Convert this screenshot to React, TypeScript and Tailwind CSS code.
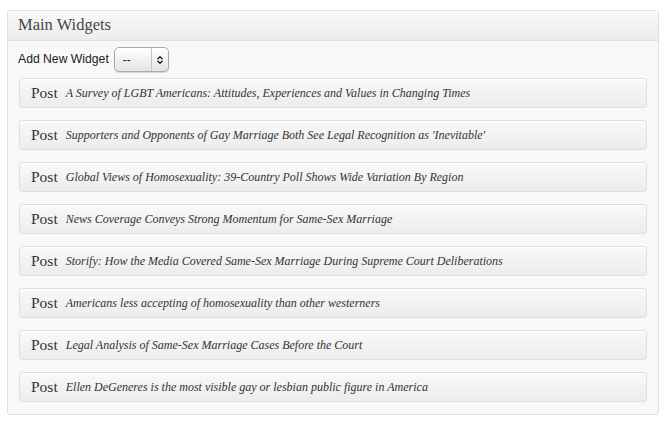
import { ChevronsUpDown } from "lucide-react";

const posts = [
  "A Survey of LGBT Americans: Attitudes, Experiences and Values in Changing Times",
  "Supporters and Opponents of Gay Marriage Both See Legal Recognition as 'Inevitable'",
  "Global Views of Homosexuality: 39-Country Poll Shows Wide Variation By Region",
  "News Coverage Conveys Strong Momentum for Same-Sex Marriage",
  "Storify: How the Media Covered Same-Sex Marriage During Supreme Court Deliberations",
  "Americans less accepting of homosexuality than other westerners",
  "Legal Analysis of Same-Sex Marriage Cases Before the Court",
  "Ellen DeGeneres is the most visible gay or lesbian public figure in America",
];

const serif = { fontFamily: 'Georgia, "Liberation Serif", serif' };

export default function App() {
  return (
    <div className="h-[424px] w-[667px] bg-white pt-[10px] pl-[7px]">
      <div className="w-[652px] rounded-[3px] border border-[#dfdfdf] bg-[#f8f8f8] shadow-[0_1px_0_#fff_inset]">
        <div className="flex h-[30px] items-center border-b border-[#dfdfdf] bg-gradient-to-b from-[#f9f9f9] to-[#ececec] pl-[10px]">
          <h2 className="text-[16.5px] text-[#464646]" style={serif}>
            Main Widgets
          </h2>
        </div>

        <div className="px-[10px] pt-[6px] pb-[12px]">
          <div className="flex items-center gap-[5px]">
            <span
              className="text-[12.2px] text-[#222]"
              style={{ fontFamily: '"Liberation Sans", Arial, sans-serif' }}
            >
              Add New Widget
            </span>
            <div className="flex h-[25px] w-[55px] items-center rounded-[5px] border border-[#aaa] bg-gradient-to-b from-white to-[#e4e4e4] shadow-[0_1px_1px_rgba(0,0,0,0.15)]">
              <span
                className="flex-1 pl-[8px] text-[12px] leading-none text-[#222]"
                style={{ fontFamily: '"Liberation Sans", Arial, sans-serif' }}
              >
                --
              </span>
              <div className="flex h-full w-[17px] items-center justify-center border-l border-[#c4c4c4]">
                <ChevronsUpDown className="h-[10px] w-[10px] text-[#222]" strokeWidth={3.5} />
              </div>
            </div>
          </div>

          <ul className="mt-[6px] flex flex-col gap-[12px] pl-px">
            {posts.map((t, i) => (
              <li
                key={i}
                className="flex h-[30px] w-[628px] items-center gap-[8px] rounded-[3px] border border-[#dfdfdf] bg-gradient-to-b from-[#f9f9f9] to-[#ececec] pl-[11px] shadow-[0_1px_0_#fff_inset]"
              >
                <span className="text-[15.5px] text-[#333]" style={serif}>
                  Post
                </span>
                <span className="text-[12px] text-[#333] italic" style={serif}>
                  {t}
                </span>
              </li>
            ))}
          </ul>
        </div>
      </div>
    </div>
  );
}
